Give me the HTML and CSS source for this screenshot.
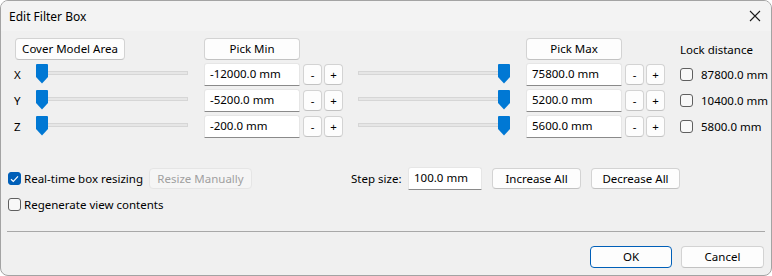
FILE: index.html
```html
<!DOCTYPE html>
<html lang="en">
<head>
    <meta charset="UTF-8">
    <title>Edit Filter Box</title>
    <link rel="stylesheet" href="styles.css">
</head>
<body>

<div class="window">
    <div class="titlebar">
        <span class="title">Edit Filter Box</span>
        <svg class="close" width="12" height="12" viewBox="0 0 12 12">
            <path d="M1 1L11 11M11 1L1 11" stroke="#1b1b1b" stroke-width="1.1" fill="none"/>
        </svg>
    </div>

    <div class="content">
        <div class="grid">
            <!-- header row -->
            <button class="btn cover">Cover Model Area</button>
            <button class="btn pick pick-min">Pick Min</button>
            <button class="btn pick pick-max">Pick Max</button>
            <div class="lock-title">Lock distance</div>

            <!-- X -->
            <div class="axis">X</div>
            <div class="slider"><div class="track"></div><svg class="thumb thumb-min" width="12" height="20" viewBox="0 0 12 20"><path d="M1 0h10a1 1 0 0 1 1 1v12l-6 6.5L0 13V1a1 1 0 0 1 1-1z"/></svg></div>
            <div class="field">-12000.0 mm</div>
            <button class="btn small">-</button>
            <button class="btn small">+</button>
            <div class="slider slider-max"><div class="track"></div><svg class="thumb thumb-max" width="12" height="20" viewBox="0 0 12 20"><path d="M1 0h10a1 1 0 0 1 1 1v12l-6 6.5L0 13V1a1 1 0 0 1 1-1z"/></svg></div>
            <div class="field">75800.0 mm</div>
            <button class="btn small">-</button>
            <button class="btn small">+</button>
            <label class="lock"><span class="check"></span>87800.0 mm</label>

            <!-- Y -->
            <div class="axis">Y</div>
            <div class="slider"><div class="track"></div><svg class="thumb thumb-min" width="12" height="20" viewBox="0 0 12 20"><path d="M1 0h10a1 1 0 0 1 1 1v12l-6 6.5L0 13V1a1 1 0 0 1 1-1z"/></svg></div>
            <div class="field">-5200.0 mm</div>
            <button class="btn small">-</button>
            <button class="btn small">+</button>
            <div class="slider slider-max"><div class="track"></div><svg class="thumb thumb-max" width="12" height="20" viewBox="0 0 12 20"><path d="M1 0h10a1 1 0 0 1 1 1v12l-6 6.5L0 13V1a1 1 0 0 1 1-1z"/></svg></div>
            <div class="field">5200.0 mm</div>
            <button class="btn small">-</button>
            <button class="btn small">+</button>
            <label class="lock"><span class="check"></span>10400.0 mm</label>

            <!-- Z -->
            <div class="axis">Z</div>
            <div class="slider"><div class="track"></div><svg class="thumb thumb-min" width="12" height="20" viewBox="0 0 12 20"><path d="M1 0h10a1 1 0 0 1 1 1v12l-6 6.5L0 13V1a1 1 0 0 1 1-1z"/></svg></div>
            <div class="field">-200.0 mm</div>
            <button class="btn small">-</button>
            <button class="btn small">+</button>
            <div class="slider slider-max"><div class="track"></div><svg class="thumb thumb-max" width="12" height="20" viewBox="0 0 12 20"><path d="M1 0h10a1 1 0 0 1 1 1v12l-6 6.5L0 13V1a1 1 0 0 1 1-1z"/></svg></div>
            <div class="field">5600.0 mm</div>
            <button class="btn small">-</button>
            <button class="btn small">+</button>
            <label class="lock"><span class="check"></span>5800.0 mm</label>
        </div>

        <div class="options">
            <div class="option-row">
                <label class="option first">
                    <span class="check checked">
                        <svg width="9" height="8" viewBox="0 0 9 8"><path d="M1 4.2L3.3 6.4L8 1.4" stroke="#fff" stroke-width="1.2" fill="none"/></svg>
                    </span>Real-time box resizing
                </label>
                <button class="btn disabled">Resize Manually</button>

                <span class="step-label">Step size:</span>
                <div class="field step-field">100.0 mm</div>
                <button class="btn step-btn">Increase All</button>
                <button class="btn step-btn">Decrease All</button>
            </div>
            <div class="option-row second">
                <label class="option"><span class="check"></span>Regenerate view contents</label>
            </div>
        </div>

        <div class="separator"></div>

        <div class="footer">
            <button class="btn default">OK</button>
            <button class="btn cancel">Cancel</button>
        </div>
    </div>
</div>

</body>
</html>
```

FILE: styles.css
```css
/* Global */
body {
    margin: 0;
    background: #ffffff;
    font-family: "Noto Sans", "Open Sans", sans-serif;
    font-size: 11.5px;
    color: #000;
}

* {
    box-sizing: border-box;
}

/* Window frame */
.window {
    width: 772px;
    height: 276px;
    border: 1px solid #a3a3a3;
    border-radius: 8px;
    background: #f0f0f0;
    overflow: hidden;
}

.titlebar {
    height: 30px;
    background: #f3f3f3;
    display: flex;
    align-items: center;
    justify-content: space-between;
    padding: 0 10px 0 8px;
}

.title {
    font-size: 12px;
}

.content {
    padding: 7px 6px 0 6px;
}

/* Controls grid */
.grid {
    margin-left: 1px;
    display: grid;
    grid-template-columns: 28px 168px 99px 21px 32px 170px 99px 21px 34px 1fr;
    grid-template-rows: 22px 23px 23px 23px;
    row-gap: 3px;
    align-items: center;
}

.btn {
    font-family: inherit;
    font-size: 11.5px;
    color: #000;
    background: #fdfdfd;
    border: 1px solid #d3d3d3;
    border-bottom-color: #c2c2c2;
    border-radius: 4px;
    padding: 0;
    height: 22px;
    line-height: 18px;
    white-space: nowrap;
}

.cover {
    grid-column: 1 / 3;
    margin-left: 7px;
    width: 110px;
}

.pick {
    width: 96px;
}

.pick-min {
    grid-column: 3 / 6;
}

.pick-max {
    grid-column: 7 / 10;
}

.lock-title {
    grid-column: 10;
    padding-top: 1px;
    white-space: nowrap;
}

.axis {
    padding-left: 6px;
}

/* Sliders */
.slider {
    position: relative;
    height: 23px;
}

.track {
    position: absolute;
    left: 1px;
    top: 8px;
    width: 151px;
    height: 4px;
    background: #e6e6e6;
    border: 1px solid #d6d6d6;
}

.slider-max .track {
    left: 2px;
    width: 150px;
}

.thumb {
    position: absolute;
    top: 1px;
    fill: #0078d4;
}

.thumb-min {
    left: 0;
}

.thumb-max {
    left: 142px;
}

/* Text fields */
.field {
    width: 96px;
    height: 23px;
    background: #fff;
    border: 1px solid #e6e6e6;
    border-bottom: 1px solid #8a8a8a;
    border-radius: 3px 3px 0 0;
    padding-left: 5px;
    line-height: 20px;
    white-space: nowrap;
}

.small {
    width: 19px;
    height: 21px;
    line-height: 17px;
}

/* Checkboxes */
.check {
    display: inline-flex;
    align-items: center;
    justify-content: center;
    width: 13px;
    height: 13px;
    border: 1px solid #5f5f5f;
    border-radius: 3px;
    background: #f8f8f8;
    flex: none;
}

.check.checked {
    background: #005fb8;
    border-color: #005fb8;
}

.lock {
    display: flex;
    align-items: center;
    gap: 8px;
    white-space: nowrap;
}

/* Options area */
.options {
    margin-top: 29px;
}

.option-row {
    display: flex;
    align-items: center;
    height: 23px;
}

.option-row.second {
    margin-top: 6px;
    height: 16px;
}

.option {
    display: flex;
    align-items: center;
    gap: 3px;
    margin-left: 1px;
    white-space: nowrap;
}

.option.first {
    width: 141px;
}

.disabled {
    width: 103px;
    height: 21px;
    color: #a0a0a0;
    background: #f5f5f5;
    border-color: #e5e5e5;
}

.step-label {
    margin-left: 99px;
    width: 57px;
}

.step-field {
    width: 74px;
}

.step-btn {
    margin-left: 10px;
    width: 89px;
    height: 21px;
}

/* Separator + footer */
.separator {
    margin-top: 19px;
    height: 1px;
    background: #a8a8a8;
}

.footer {
    margin-top: 14px;
    display: flex;
    justify-content: flex-end;
    gap: 9px;
    padding-right: 1px;
}

.default {
    width: 82px;
    border: 1px solid #005fb8;
}

.cancel {
    width: 83px;
}
```
